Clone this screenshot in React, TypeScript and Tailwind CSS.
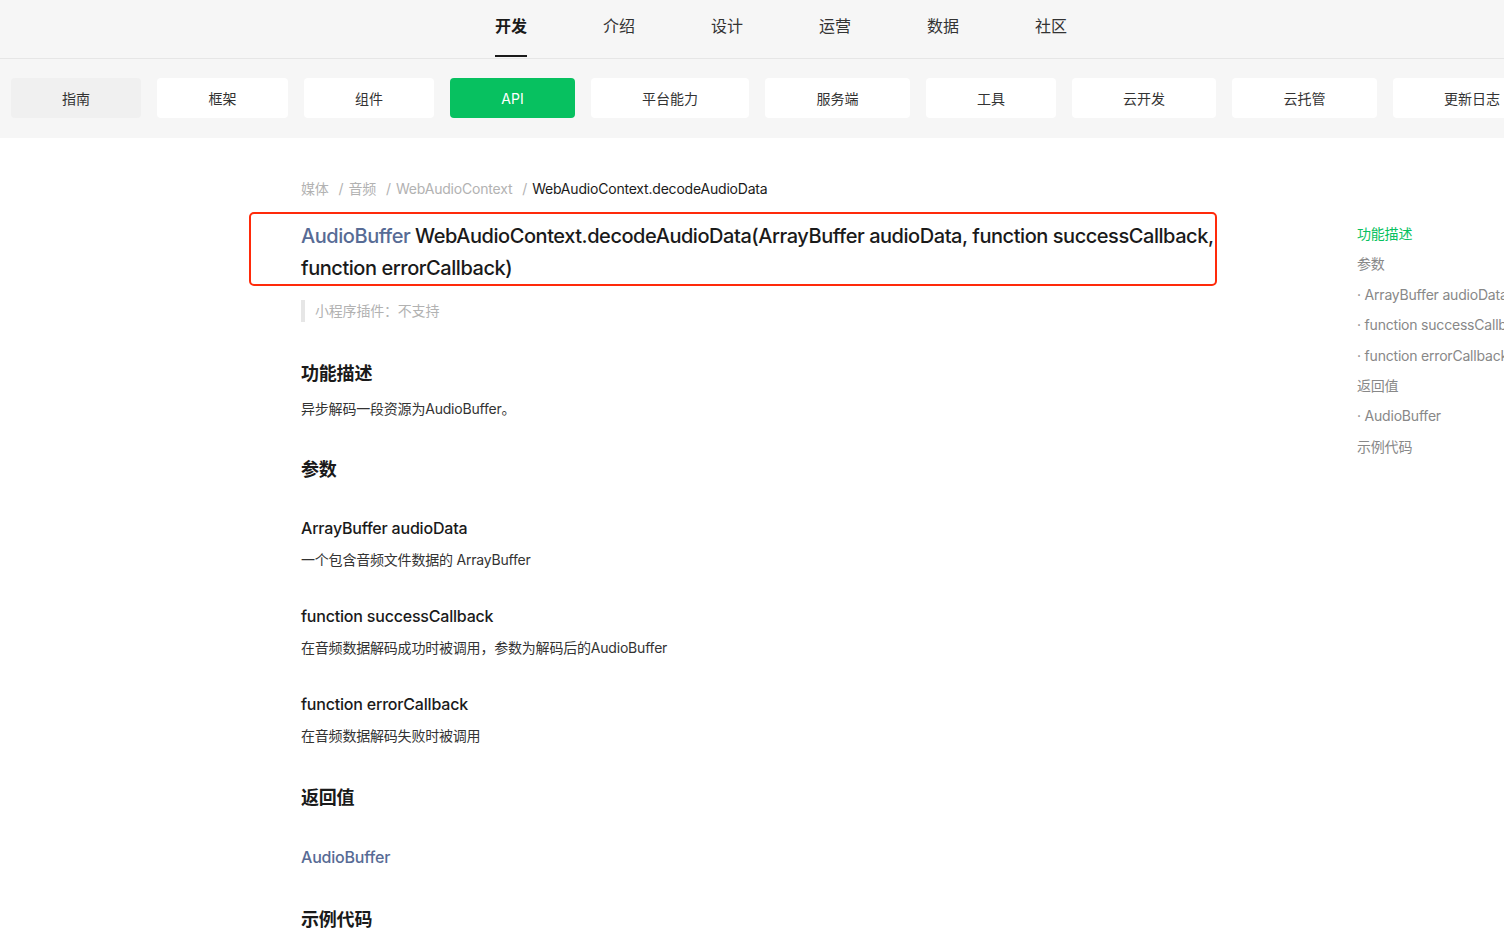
import React from "react";

const topNav = ["开发", "介绍", "设计", "运营", "数据", "社区"];

const tabs = [
  { label: "指南", w: "w-[130px]" },
  { label: "框架", w: "w-[131px]" },
  { label: "组件", w: "w-[130px]" },
  { label: "API", w: "w-[125px]" },
  { label: "平台能力", w: "w-[158px]" },
  { label: "服务端", w: "w-[145px]" },
  { label: "工具", w: "w-[130px]" },
  { label: "云开发", w: "w-[144px]" },
  { label: "云托管", w: "w-[145px]" },
  { label: "更新日志", w: "w-[158px]" },
];

const toc = [
  { label: "功能描述", active: true },
  { label: "参数" },
  { label: "· ArrayBuffer audioData" },
  { label: "· function successCallback" },
  { label: "· function errorCallback" },
  { label: "返回值" },
  { label: "· AudioBuffer" },
  { label: "示例代码" },
];

function Param({ name, desc }: { name: string; desc: string }) {
  return (
    <div className="mt-[33px]">
      <div className="text-[16px] leading-6 font-medium text-[#1a1a1a]">{name}</div>
      <p className="mt-[9px] text-[14px] leading-[22px] text-[#333]">{desc}</p>
    </div>
  );
}

function Sep() {
  return <span className="ml-[10px] mr-[5px]">/</span>;
}

export default function App() {
  return (
    <div
      className="w-full min-h-[934px] overflow-hidden bg-white tracking-[-0.2px]"
      style={{ fontFamily: '"Inter", "Noto Sans CJK SC", sans-serif' }}
    >
      {/* 顶部导航 */}
      <div className="h-[59px] bg-[#f6f6f6] border-b border-[#e6e6e6] flex pl-[457px] tracking-normal">
        {topNav.map((item, i) => (
          <div key={item} className="relative w-[108px] flex items-center justify-center pb-[6px]">
            <span className={i === 0 ? "text-[16px] font-semibold text-[#1a1a1a]" : "text-[16px] text-[#333]"}>
              {item}
            </span>
            {i === 0 && <div className="absolute bottom-[1px] left-1/2 -translate-x-1/2 w-8 h-[2px] bg-[#1a1a1a]" />}
          </div>
        ))}
      </div>

      {/* 二级标签 */}
      <div className="h-[79px] bg-[#f6f6f6] flex gap-4 px-[11px] pt-[19px] overflow-hidden tracking-normal">
        {tabs.map((t) => {
          const cls =
            t.label === "API"
              ? "bg-[#07c160] text-white"
              : t.label === "指南"
              ? "bg-[#f0f0f0] text-[#333]"
              : "bg-white text-[#333]";
          return (
            <div
              key={t.label}
              className={`shrink-0 h-10 ${t.w} rounded flex items-center justify-center text-[14px] whitespace-nowrap ${cls}`}
            >
              {t.label}
            </div>
          );
        })}
      </div>

      {/* 正文 */}
      <div className="flex pl-[301px] pt-[40px]">
        <div className="w-[916px] shrink-0">
          <div className="flex items-center text-[14px] leading-[22px] text-[#b2b2b2]">
            <span>媒体</span>
            <Sep />
            <span>音频</span>
            <Sep />
            <span>WebAudioContext</span>
            <Sep />
            <span className="text-[#1a1a1a]">WebAudioContext.decodeAudioData</span>
          </div>

          <div className="mt-[12px] -ml-[52px] w-[968px] h-[74px] border-2 border-[#ff2a0a] rounded-[5px] pl-[50px] pt-[6px]">
            <h1 className="text-[20px] leading-8 font-medium text-[#1a1a1a] whitespace-nowrap tracking-[-0.45px]">
              <span className="text-[#576b95]">AudioBuffer</span> WebAudioContext.decodeAudioData(ArrayBuffer audioData,
              function successCallback,
              <br />
              function errorCallback)
            </h1>
          </div>

          <div className="mt-[14px] border-l-4 border-[#e6e6e6] pl-[10px] text-[14px] leading-[22px] text-[#b2b2b2]">
            小程序插件：不支持
          </div>

          <h2 className="mt-[39px] text-[18px] leading-[26px] font-semibold text-[#1a1a1a]">功能描述</h2>
          <p className="mt-[11px] text-[14px] leading-[22px] text-[#333]">异步解码一段资源为AudioBuffer。</p>

          <h2 className="mt-[37px] text-[18px] leading-[26px] font-semibold text-[#1a1a1a]">参数</h2>
          <Param name="ArrayBuffer audioData" desc="一个包含音频文件数据的 ArrayBuffer" />
          <Param name="function successCallback" desc="在音频数据解码成功时被调用，参数为解码后的AudioBuffer" />
          <Param name="function errorCallback" desc="在音频数据解码失败时被调用" />

          <h2 className="mt-[38px] text-[18px] leading-[26px] font-semibold text-[#1a1a1a]">返回值</h2>
          <div className="mt-[34px] text-[16px] leading-6 font-medium text-[#576b95]">AudioBuffer</div>

          <h2 className="mt-[38px] text-[18px] leading-[26px] font-semibold text-[#1a1a1a]">示例代码</h2>
        </div>

        {/* 右侧目录 */}
        <div className="ml-[140px] mt-[45px] flex flex-col gap-[8.4px] shrink-0">
          {toc.map((item) => (
            <div
              key={item.label}
              className={`text-[14px] leading-[22px] whitespace-nowrap ${item.active ? "text-[#07c160]" : "text-[#888]"}`}
            >
              {item.label}
            </div>
          ))}
        </div>
      </div>
    </div>
  );
}
